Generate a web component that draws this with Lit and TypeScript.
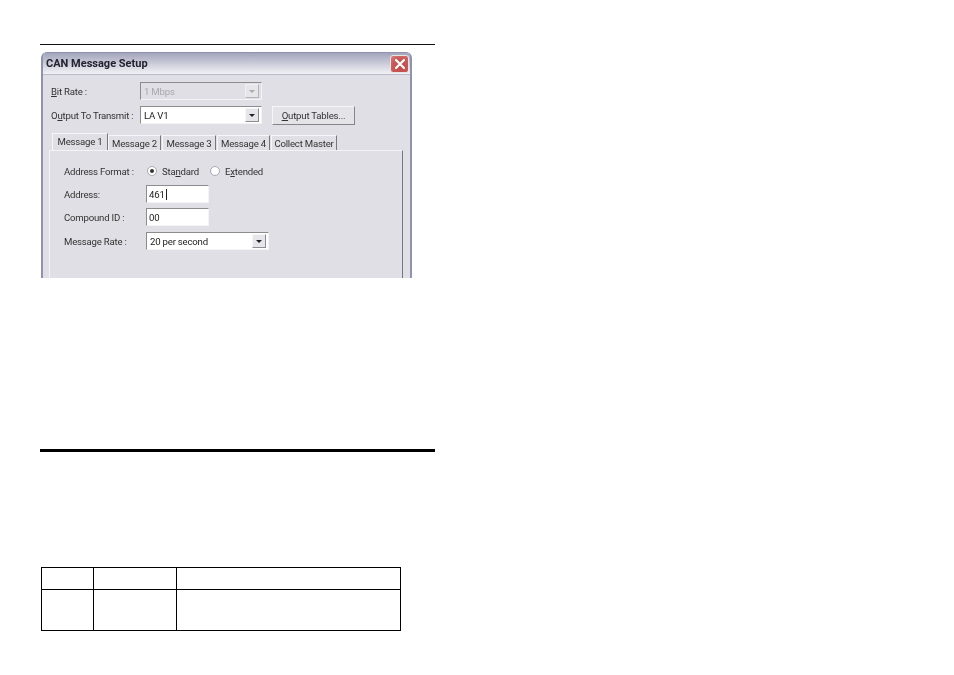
import { LitElement, html, css } from "lit";
import { customElement } from "lit/decorators.js";

const arrow = html`<svg class="arrow" width="6" height="3" viewBox="0 0 6 3"><path d="M0 0h6L3 3z" fill="currentColor"/></svg>`;

@customElement("app-root")
export class AppRoot extends LitElement {
  static styles = css`
    :host { display: block; width: 954px; height: 675px; background: #fff; overflow: hidden; }
    .page { display: flex; flex-direction: column; align-items: flex-start; padding: 44px 0 0 40px; width: 395px; }
    .rule { width: 395px; height: 1px; background: #111; }
    .rule.thick { height: 3px; margin-top: 171px; background: #000; }

    .win {
      margin: 7px 0 0 1px; width: 371px; height: 226px; box-sizing: border-box; overflow: hidden;
      background: #dfdfe5; border-radius: 6px 6px 0 0;
      font: 9.6px Roboto, "Liberation Sans", Arial, sans-serif; letter-spacing: -0.2px; color: #333; filter: blur(0.35px);
      border-left: 2px solid #8f93b0; border-right: 2px solid #8f93b0;
    }
    .title {
      height: 23px; box-sizing: border-box; padding: 0 2px 0 4px; display: flex; align-items: center; justify-content: space-between;
      background: linear-gradient(#a2a4bc, #cfd0dc 55%, #f2f2f6);
      border-top: 1px solid #8f93b0; border-bottom: 1px solid #b9bbca;
      margin: 0 -1px;
    }
    .title b { font: bold 11px Roboto, "Liberation Sans", Arial, sans-serif; color: #23232f; letter-spacing: 0; }
    .close {
      width: 19px; height: 18px; box-sizing: border-box; border-radius: 3px; display: flex; align-items: center; justify-content: center;
      background: radial-gradient(circle at 60% 70%, #c14a46, #c95a5a 60%, #d68581); border: 1px solid #e8e4e4;
    }
    .body { padding: 7px 7px 0 6px; }
    .row { display: flex; align-items: center; }
    .row.top { height: 18px; margin-bottom: 6px; padding-left: 2px; }
    .lab { width: 89px; white-space: nowrap; }
    u { text-decoration: underline; text-underline-offset: 1px; }
    .field {
      box-sizing: border-box; height: 18px; background: #fff; display: flex; align-items: center; justify-content: space-between;
      padding: 0 2px 0 3px; border: 1px solid; border-color: #8c8c8c #f4f4f6 #f4f4f6 #8c8c8c; color: #222;
    }
    .combo { width: 122px; }
    .combo.dis { background: #dfdfe5; color: #a8a8ad; }
    .combo.wide { width: 123px; }
    .arrowbox {
      width: 14px; height: 14px; box-sizing: border-box; display: flex; align-items: center; justify-content: center;
      background: #e6e6ea; border: 1px solid; border-color: #f6f6f8 #8e8e92 #8e8e92 #f6f6f8; color: #222;
    }
    .dis .arrowbox { color: #aaa; border-color: #f0f0f2 #b5b5b8 #b5b5b8 #f0f0f2; }
    .btn {
      margin-left: 10px; width: 83px; height: 19px; box-sizing: border-box; display: flex; align-items: center; justify-content: center;
      background: #e4e4e8; border: 1px solid; border-color: #f6f6f8 #85858a #85858a #f6f6f8; color: #333;
    }
    .tabs { display: flex; align-items: flex-end; height: 17px; margin: 9px 0 0 3px; }
    .tab {
      box-sizing: border-box; height: 15px; display: flex; align-items: center; justify-content: center; white-space: nowrap;
      border-top: 1px solid #f6f6f8; border-left: 1px solid #f6f6f8; border-right: 1px solid #77777c; margin-right: 1px;
    }
    .tab.on { height: 17px; margin-right: 0; padding-bottom: 1px; background: #dfdfe5; }
    .panel {
      box-sizing: border-box; height: 140px; padding: 12px 0 0 14px;
      border-top: 1px solid #f4f4f6; border-left: 1px solid #f4f4f6; border-right: 1px solid #77777c;
    }
    .frow { display: flex; align-items: center; height: 18px; margin-bottom: 5px; }
    .frow.first { height: 16px; margin-bottom: 6px; }
    .frow.gap { margin-bottom: 6px; }
    .flab { width: 82px; white-space: nowrap; }
    .input { width: 63px; padding-left: 2px; justify-content: flex-start; }
    .radio { display: flex; align-items: center; gap: 5px; margin-right: 10px; margin-left: 1px; }
    .dot {
      width: 10px; height: 10px; box-sizing: border-box; border-radius: 50%; background: #fff;
      border: 1px solid #a9a9b0; display: flex; align-items: center; justify-content: center;
    }
    .dot i { width: 4px; height: 4px; border-radius: 50%; background: #333; }
    .caret { display: inline-block; width: 1px; height: 11px; background: #222; margin-left: 1px; }

    table { margin-top: 115px; margin-left: 1px; width: 360px; height: 64px; border-collapse: collapse; table-layout: fixed; }
    td { border: 1px solid #000; padding: 0; }
    tr.h { height: 22px; }
  `;

  private combo(text: string, cls = "") {
    return html`<div class="field combo ${cls}"><span>${text}</span><span class="arrowbox">${arrow}</span></div>`;
  }

  render() {
    return html`
      <div class="page">
        <div class="rule"></div>
        <div class="win">
          <div class="title">
            <b>CAN Message Setup</b>
            <span class="close">
              <svg width="12" height="12" viewBox="0 0 12 12"><path d="M2 2l8 8M10 2l-8 8" stroke="#fff" stroke-width="2.2" stroke-linecap="round"/></svg>
            </span>
          </div>
          <div class="body">
            <div class="row top"><span class="lab"><u>B</u>it Rate :</span>${this.combo("1 Mbps", "dis")}</div>
            <div class="row top">
              <span class="lab">O<u>u</u>tput To Transmit :</span>${this.combo("LA V1")}
              <div class="btn"><span><u>O</u>utput Tables...</span></div>
            </div>
            <div class="tabs">
              <div class="tab on" style="width:56px">Message 1</div>
              <div class="tab" style="width:53px">Message 2</div>
              <div class="tab" style="width:54px">Message 3</div>
              <div class="tab" style="width:53px">Message 4</div>
              <div class="tab" style="width:66px">Collect Master</div>
            </div>
            <div class="panel">
              <div class="frow first">
                <span class="flab">Address Format :</span>
                <span class="radio"><span class="dot"><i></i></span><span>Sta<u>n</u>dard</span></span>
                <span class="radio"><span class="dot"></span><span>E<u>x</u>tended</span></span>
              </div>
              <div class="frow"><span class="flab">Address:</span><div class="field input">461<span class="caret"></span></div></div>
              <div class="frow gap"><span class="flab">Compound ID :</span><div class="field input">00</div></div>
              <div class="frow"><span class="flab">Message Rate :</span>${this.combo("20 per second", "wide")}</div>
            </div>
          </div>
        </div>
        <div class="rule thick"></div>
        <table>
          <colgroup><col style="width:52px" /><col style="width:83px" /><col /></colgroup>
          <tr class="h"><td></td><td></td><td></td></tr>
          <tr><td></td><td></td><td></td></tr>
        </table>
      </div>
    `;
  }
}
